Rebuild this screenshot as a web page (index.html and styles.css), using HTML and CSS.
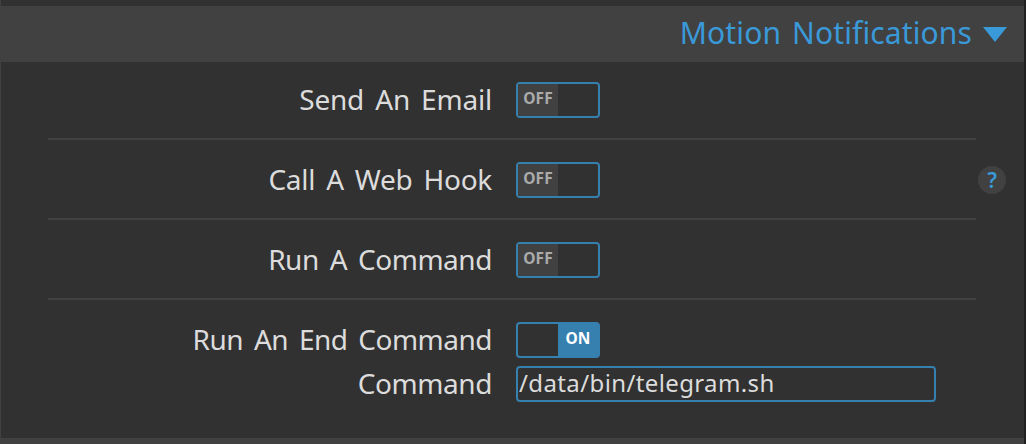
FILE: index.html
```html
<!DOCTYPE html>
<html lang="en">
<head>
<meta charset="utf-8">
<title>Motion Notifications</title>
<link rel="stylesheet" href="styles.css">
</head>
<body>
<main class="panel">
  <header class="section-header">
    <h1 class="section-title">Motion Notifications</h1>
    <svg class="arrow" width="24" height="15" viewBox="0 0 24 15"><path d="M0 0H24L12 15Z" fill="currentColor"/></svg>
  </header>
  <div class="settings">
    <div class="row">
      <span class="label label-email">Send An Email</span>
      <div class="switch"><span class="state">OFF</span></div>
    </div>
    <hr class="divider">
    <div class="row">
      <span class="label label-hook">Call A Web Hook</span>
      <div class="switch"><span class="state">OFF</span></div>
      <span class="help">?</span>
    </div>
    <hr class="divider">
    <div class="row">
      <span class="label label-run">Run A Command</span>
      <div class="switch"><span class="state">OFF</span></div>
    </div>
    <hr class="divider">
    <div class="row">
      <span class="label label-end">Run An End Command</span>
      <div class="switch on"><span class="state">ON</span></div>
    </div>
    <div class="row row-input">
      <label class="label label-command" for="command">Command</label>
      <input class="command" id="command" type="text" value="/data/bin/telegram.sh">
    </div>
  </div>
  <div class="next-section"></div>
</main>
</body>
</html>
```
FILE: styles.css
```css
* { box-sizing: border-box; }
body {
  margin: 0;
  background: #212121;
  font-family: "Noto Sans", "Open Sans", sans-serif;
}
.panel {
  display: flex;
  flex-direction: column;
  width: 1024px;
  height: 444px;
  padding-top: 6px;
  border-left: 1px solid #414141;
  background: #313131;
  overflow: hidden;
}
.section-header {
  display: flex;
  justify-content: flex-end;
  align-items: center;
  gap: 11px;
  height: 56px;
  padding-right: 17px;
  background: #414141;
  color: #3a99d9;
}
.section-title {
  margin: 0;
  padding-bottom: 2px;
  font-size: 30px;
  font-weight: 400;
  letter-spacing: 0.12px;
  line-height: 54px;
  white-space: nowrap;
  word-spacing: 3px;
}
.settings { flex: 1; padding-top: 20px; }
.row {
  display: flex;
  align-items: center;
  gap: 24px;
  height: 36px;
  padding-right: 18px;
}
.row-input { margin-top: 8px; }
.label {
  width: 491px;
  padding-bottom: 2px;
  color: #dcdcdc;
  font-size: 28px;
  line-height: 34px;
  text-align: right;
  white-space: nowrap;
  word-spacing: 4px;
}
.label-email { letter-spacing: -0.2px; }
.label-hook { letter-spacing: -0.27px; }
.label-run { letter-spacing: -0.45px; }
.label-end { letter-spacing: -0.5px; }
.label-command { letter-spacing: -0.43px; }
.switch {
  display: flex;
  width: 84px;
  height: 36px;
  border: 2px solid #3580af;
  border-radius: 4px;
}
.state {
  width: 40px;
  height: 32px;
  background: #414141;
  color: #aaa;
  font-size: 15.5px;
  font-weight: 700;
  line-height: 29px;
  text-align: center;
}
.on { justify-content: flex-end; }
.on .state { background: #3580af; color: #fff; }
.divider {
  width: 928px;
  height: 2px;
  margin: 20px 0 22px 47px;
  border: 0;
  background: #414141;
}
.help {
  width: 28px;
  height: 28px;
  margin-left: auto;
  border-radius: 50%;
  background: #414141;
  color: #3a99d9;
  font-size: 21px;
  font-weight: 600;
  line-height: 29px;
  text-align: center;
}
.command {
  width: 420px;
  height: 36px;
  padding: 0 1px 3px;
  border: 2px solid #3580af;
  border-radius: 4px;
  background: transparent;
  color: #dcdcdc;
  font: 24px "Noto Sans", "Open Sans", sans-serif;
  letter-spacing: 0.38px;
}
.next-section { height: 6px; background: #414141; }
```
